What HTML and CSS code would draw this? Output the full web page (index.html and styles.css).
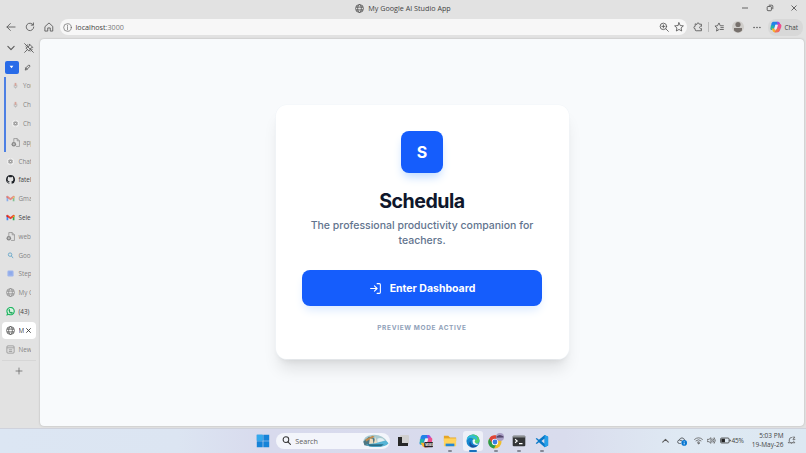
FILE: index.html
```html
<!DOCTYPE html>
<html lang="en">
<head>
    <meta charset="UTF-8">
    <meta name="viewport" content="width=device-width, initial-scale=1.0">
    <title>My Google AI Studio App</title>
    <link rel="stylesheet" href="styles.css">
</head>
<body>
    <svg class="defs" width="0" height="0">
        <symbol id="globe" viewBox="0 0 16 16"><g fill="none" stroke="currentColor" stroke-width="1.3"><circle cx="8" cy="8" r="7"/><ellipse cx="8" cy="8" rx="3.3" ry="7"/><path d="M1.6 5.5h12.8M1.6 10.5h12.8"/></g></symbol>
        <symbol id="gmail" viewBox="0 0 16 16"><path fill="#4285f4" d="M1 4v9h3V6z"/><path fill="#34a853" d="M12 6v7h3V4z"/><path fill="#ea4335" d="M1 3.5L3 3l5 4 5-4 2 .5V6l-7 5-7-5z"/><path fill="#c5221f" d="M1 4l3 2v2L1 6z"/><path fill="#fbbc04" d="M15 4l-3 2v2l3-2z"/></symbol>
        <symbol id="page" viewBox="0 0 16 16"><path fill="none" stroke="currentColor" stroke-width="1.2" d="M5 7V1h6l4 4v10H9M11 1v4h4"/><circle cx="5" cy="11" r="4" fill="currentColor"/><path stroke="#e3e3e3" d="M3 11h4M5 9v4"/></symbol>
        <symbol id="gpt" viewBox="0 0 16 16"><circle cx="8" cy="8" r="8" fill="#f0f0f0"/><g fill="none" stroke="currentColor" stroke-width="1.1"><ellipse cx="8" cy="8" rx="2.3" ry="5.2"/><ellipse cx="8" cy="8" rx="2.3" ry="5.2" transform="rotate(60 8 8)"/><ellipse cx="8" cy="8" rx="2.3" ry="5.2" transform="rotate(120 8 8)"/></g></symbol>
        <symbol id="mic" viewBox="0 0 16 16"><path fill="#d6a49a" d="M6 2h4v7H6z"/><path fill="none" stroke="#aaa" stroke-width="1.4" d="M5 6v6h6V6M8 12v3"/></symbol>
        <symbol id="copilot" viewBox="0 0 16 16"><path fill="#2183e8" d="M4 1h6l2 4H7L5 12H2Q0 12 1 9L2 3Q3 1 4 1z"/><path fill="#20b8a4" d="M1 6h5l-2 6H2Q0 11 1 8z"/><path fill="#f6b32c" d="M2 10h4l2 5H6Q4 15 3 12z"/><path fill="#9a4be0" d="M9 1h2q2 0 3 4h-4z"/><path fill="#ef4f8c" d="M11 4h3q2 1 1 4l-2 5q-1 2-3 2H6l3-4z"/><path fill="#f2744c" d="M6 15l3-5h4l-1 3q-1 2-3 2z"/><path fill="#eef0fa" d="M7.5 5h2.7L8.6 11H5.8z"/></symbol>
    </svg>

    <div class="browser">
        <header class="titlebar">
            <div class="window-title"><svg><use href="#globe"/></svg><span>My Google AI Studio App</span></div>
            <div class="window-buttons">
                <svg viewBox="0 0 8 8"><path d="M1 4h6"/></svg>
                <svg viewBox="0 0 8 8"><rect x="1.2" y="2.5" width="4.2" height="4.2" rx=".8"/><path d="M2.8 1.2h3q1 0 1 1v3"/></svg>
                <svg viewBox="0 0 8 8"><path d="M1.5 1.5l5 5M6.5 1.5l-5 5"/></svg>
            </div>
        </header>

        <nav class="toolbar">
            <svg class="icon" viewBox="0 0 16 16"><path d="M14.500 8h-13M7 2.500L1.500 8 7 13.500"/></svg>
            <svg class="icon" viewBox="0 0 16 16"><path d="M13 4.500a6 6 0 1 0 1 3.500M13.500 1.500v3.500H10"/></svg>
            <svg class="icon" viewBox="0 0 16 16"><path d="M2 7l6-5.500L14 7v7.500h-4V9.500H6v5H2z"/></svg>
            <div class="address">
                <svg class="icon info" viewBox="0 0 16 16"><circle cx="8" cy="8" r="6.800"/><path d="M8 7v5M8 4v1.400"/></svg>
                <span class="url">localhost<i>:3000</i></span>
                <svg class="icon" viewBox="0 0 16 16"><circle cx="7" cy="7" r="5.200"/><path d="M11 11l4 4M4.500 7h5M7 4.500v5"/></svg>
                <svg class="icon star" viewBox="0 0 16 16"><path d="M8 1.200l2 4.500 5 .5-3.700 3.300 1 4.900L8 11.900l-4.300 2.500 1-4.900L1 6.200l5-.5z"/></svg>
            </div>
            <div class="tools">
                <svg class="icon" viewBox="0 0 16 16"><path d="M6 3.500a2 2 0 0 1 4 0h3.500V7a2 2 0 1 0 0 3.500V14H5q-1.500 0-1.500-1.500v-1.700a2 2 0 0 1 0-4V3.500z"/></svg>
                <span class="divider"></span>
                <svg class="icon" viewBox="0 0 16 16"><path d="M8 12l-4 2.500 1-4.900L1.500 6.500l4-.5L8 1.500l2 4.500h5M11 9h4M10 12h5"/></svg>
                <svg class="avatar" viewBox="0 0 12 12"><circle cx="6" cy="6" r="6" fill="#cfcdca"/><circle cx="6" cy="3.500" r="2.600" fill="#77716d"/><path fill="#77716d" d="M2 7h8v2.500Q6 13.500 2 9.500z"/></svg>
                <svg class="dots" viewBox="0 0 9 3"><circle cx="1.200" cy="1.500" r=".9"/><circle cx="4.500" cy="1.500" r=".9"/><circle cx="7.800" cy="1.500" r=".9"/></svg>
                <div class="chat"><svg><use href="#copilot"/></svg><span>Chat</span></div>
            </div>
        </nav>

        <div class="workspace">
            <aside class="tabs">
                <div class="tab-actions">
                    <svg class="icon chevron" viewBox="0 0 16 16"><path d="M3 5.500l5 5 5-5"/></svg>
                    <svg class="icon" viewBox="0 0 16 16"><path d="M1 1l14 14M9 2l5 5-3 1-3 5-5-5 5-3zM5.500 10.500L1 15M3 5l3-2M11 13l2-3"/></svg>
                </div>
                <div class="tab-actions">
                    <span class="group-chip"><svg viewBox="0 0 8 6"><path d="M1 1h6L4 5z"/></svg></span>
                    <svg class="icon pencil" viewBox="0 0 16 16"><path d="M3 13l1-4 7-7 3 3-7 7zM4 9l3 3"/></svg>
                </div>
                <div class="group">
                    <div class="tab"><svg class="small"><use href="#mic"/></svg><span>You</span></div>
                    <div class="tab"><svg class="small"><use href="#mic"/></svg><span>Ch</span></div>
                    <div class="tab"><svg class="small"><use href="#gpt"/></svg><span>Ch</span></div>
                    <div class="tab"><svg><use href="#page"/></svg><span>app</span></div>
                </div>
                <div class="tab"><svg class="small"><use href="#gpt"/></svg><span>Chat</span></div>
                <div class="tab loaded"><svg viewBox="0 0 16 16"><path fill="#1f2328" d="M8 0C3.600 0 0 3.600 0 8c0 3.500 2.300 6.500 5.500 7.600.4.100.5-.2.5-.4v-1.500c-2.200.5-2.700-.9-2.700-.9-.4-.9-.9-1.200-.9-1.200-.7-.5.1-.5.1-.5.8.1 1.200.8 1.200.8.7 1.200 1.900.9 2.300.7.100-.5.300-.9.500-1.100-1.800-.2-3.600-.9-3.600-4 0-.9.300-1.600.8-2.100-.1-.2-.4-1 .1-2.100 0 0 .7-.2 2.200.8a7.600 7.600 0 0 1 4 0c1.500-1 2.200-.8 2.200-.8.4 1.100.2 1.900.1 2.100.5.600.8 1.300.8 2.100 0 3.100-1.900 3.700-3.700 3.900.3.300.6.800.6 1.500v2.300c0 .2.100.5.500.4A8 8 0 0 0 8 0z"/></svg><span>fatel</span></div>
                <div class="tab faded"><svg><use href="#gmail"/></svg><span>Gmai</span></div>
                <div class="tab loaded"><svg><use href="#gmail"/></svg><span>Sele</span></div>
                <div class="tab"><svg><use href="#page"/></svg><span>web</span></div>
                <div class="tab"><svg class="small" viewBox="0 0 16 16"><g fill="none" stroke="#65a5c8" stroke-width="2"><circle cx="7" cy="6" r="4"/><path d="M10 9l4 5"/></g></svg><span>Goo</span></div>
                <div class="tab"><svg class="small" viewBox="0 0 16 16"><rect x="1" y="1" width="14" height="14" rx="3" fill="#9db5ed"/><path stroke="#86a2e8" stroke-width="2" d="M4 5h8M4 9h8"/></svg><span>Step</span></div>
                <div class="tab"><svg><use href="#globe"/></svg><span>My G</span></div>
                <div class="tab loaded"><svg viewBox="0 0 16 16"><path fill="#d9f3e2" stroke="#20b562" stroke-width="2" d="M2 14l.8-3A6.500 6.500 0 1 1 5 13z"/><path fill="#20a65b" d="M5 4l1.500-.3L7.500 6l-.8 1.200Q7.500 8.800 9 9.500l1.200-1 2 1.200Q12 12 10 12 5 11 4.500 6z"/></svg><span>(43)</span></div>
                <div class="tab active"><svg><use href="#globe"/></svg><span>M</span><svg class="close" viewBox="0 0 8 8"><path d="M1.500 1.500l5 5M6.500 1.500l-5 5"/></svg></div>
                <div class="tab"><svg viewBox="0 0 16 16"><g fill="none" stroke="currentColor" stroke-width="1.200"><rect x="1.500" y="1.500" width="13" height="13" rx="2"/><path d="M2 5h12M5 8.500h6M5 11.500h6"/></g></svg><span>New</span></div>
                <div class="new-tab"><svg class="icon" viewBox="0 0 16 16"><path d="M8 2v12M2 8h12"/></svg></div>
            </aside>

            <main class="page">
                <section class="card">
                    <div class="logo">S</div>
                    <h1>Schedula</h1>
                    <p class="tagline">The professional productivity companion for teachers.</p>
                    <button class="enter">
                        <svg viewBox="0 0 24 24"><path d="M15 3h4a2 2 0 0 1 2 2v14a2 2 0 0 1-2 2h-4M10 17l5-5-5-5M15 12H3"/></svg>
                        <span>Enter Dashboard</span>
                    </button>
                    <p class="mode">PREVIEW MODE ACTIVE</p>
                </section>
            </main>
        </div>
    </div>

    <footer class="taskbar">
        <div class="apps">
            <div class="app"><svg viewBox="0 0 14 14"><path fill="#1683d8" d="M.8.8h5.900v5.900H.8zM7.300.8h5.900v5.900H7.300zM.8 7.300h5.900v5.900H.8zM7.300 7.300h5.900v5.900H7.300z"/><path fill="#35a9ed" d="M.8.8h5.900v5.900H.8z"/></svg></div>
            <div class="search">
                <svg class="icon" viewBox="0 0 16 16"><circle cx="7" cy="6.500" r="5"/><path d="M10.500 10.500l4.500 4.500"/></svg>
                <span>Search</span>
                <svg class="scene" viewBox="0 0 28 15"><path fill="#a8c9cf" d="M1 9Q1 2 10 1q12-1 17 8-3 5-13 5T1 9z"/><path fill="#4e7884" d="M1 8l6-5 5 1 3 5-7 4-6-1z"/><path fill="#c08b4d" d="M3 6l8-4 2 1-9 5z"/><path fill="#ecdcc0" d="M8 5h3l1 6H7zM14 3l2 8h-4z"/><path fill="#55b4d6" d="M14 10l11-3 3 3q-3 4-13 4-9 0-11-3z"/><path fill="#e2eff2" d="M16 5q5-2 8 2l-8 2z"/><path fill="#2b6d86" d="M5 11l18 0-3 2H8z"/></svg>
            </div>
            <div class="app"><svg viewBox="0 0 14 14"><rect x="4" y="1" width="9" height="9" rx="1" fill="#d0cfcf"/><path fill="#272727" d="M2 3h4v6h6v3H2z"/></svg></div>
            <div class="app"><svg viewBox="0 0 16 16"><use href="#copilot"/><rect x="6" y="9" width="10" height="6" rx="1" fill="#292426"/><text x="7" y="13.200" class="badge">M365</text></svg></div>
            <div class="app running"><svg viewBox="0 0 16 16"><path fill="#e5a526" d="M1 2h5l2 2h7v4H1z"/><path fill="#ffd35c" d="M1 5h14v9H1z"/><path fill="#2286d5" d="M3 11h10v3H3z"/></svg></div>
            <div class="app running current"><svg viewBox="0 0 16 16"><circle cx="8" cy="8" r="7.500" fill="#1687cf"/><path fill="#4cd06f" d="M2 3.500Q5 0 9 .6q6 1 6.500 7Q15 11 11 11q-3-1-1.500-3Q9 4 2 3.500z"/><path fill="#30b8df" d="M1 5q3-5 9-3 4 2 2 5-2-3-6-3-3 0-5 3z"/><path fill="#164f9d" d="M5 8q0 6 8 5.500-3 3-7 1.500-4-3-1-7z"/><path fill="#eef7fc" d="M7.500 7Q10 5 10.500 7.500 9 9 11 10.500q2 1.500 4 0-1 2-3 2Q7 12 7.500 7z"/></svg></div>
            <div class="app running"><svg class="chrome" viewBox="0 0 16 16"><circle cx="7" cy="9" r="6.500" fill="#efbe2c"/><path fill="#df4438" d="M1.300 5.500A6.500 6.500 0 0 1 13 6.500H7L4.500 11z"/><path fill="#2b9b4b" d="M1.300 5.500L5 11.500l3 .5-2 3.500A6.500 6.500 0 0 1 1.300 5.500z"/><circle cx="7" cy="9" r="3.200" fill="#fff"/><circle cx="7" cy="9" r="2.400" fill="#397de6"/><circle cx="12" cy="4" r="4" fill="#aaa0c6"/><path fill="#55486d" d="M8.500 3.500q3-3 7 0v1l-7 .3z"/></svg></div>
            <div class="app running"><svg viewBox="0 0 16 16"><rect x=".8" y="2" width="14.400" height="12" rx="1.200" fill="#343638"/><path fill="#8d9092" d="M1 2h14v2H1z"/><path fill="none" stroke="#fff" stroke-width="1.200" d="M3.500 6l2.500 2-2.500 2M8 11h4"/></svg></div>
            <div class="app running"><svg viewBox="0 0 16 16"><path fill="#0878c8" fill-rule="evenodd" d="M11 1l4 2v10l-4 2-6.500-5.500L2 11.500l-1.200-1L3.500 8 .8 5.500 2 4.500l2.500 2zM11 5L7.300 8l3.700 3z"/><path fill="#269fe8" d="M11 1l4 2v10l-4 2z"/></svg></div>
        </div>
        <div class="tray">
            <svg class="icon caret" viewBox="0 0 16 16"><path d="M3 11l5-5 5 5"/></svg>
            <svg class="onedrive" viewBox="0 0 16 16"><path fill="none" stroke="#555b60" stroke-width="1.500" d="M6 12H4Q1 12 1 9q0-2 2.500-2.500Q5 3 8 3t4.500 4M4 7q3-1 5 2"/><circle cx="11.500" cy="11" r="4.500" fill="#0877d1"/><path stroke="#fff" stroke-width="1.300" d="M11.500 8.500v1M11.500 10.500v3"/></svg>
            <svg class="icon wifi" viewBox="0 0 16 16"><path d="M1 6q7-6 14 0M3.500 8.500q4.500-4 9 0M6 11q2-2 4 0"/><circle cx="8" cy="13" r="1"/></svg>
            <svg class="icon volume" viewBox="0 0 16 16"><path d="M1 6h2.500L7 3v10L3.500 10H1zM9 6q1.500 2 0 4M11 4.500q3 3.500 0 7M13 3q4 5 0 10"/></svg>
            <svg class="battery" viewBox="0 0 20 12"><rect x="1" y="1.500" width="15.500" height="9" rx="2" fill="none" stroke="#333" stroke-width="1.400"/><path fill="#222" d="M2.500 3H9v6H2.500zM17.500 4q2 0 2 2t-2 2z"/></svg>
            <span class="percent">45%</span>
            <div class="clock"><span>5:03 PM</span><span>19-May-26</span></div>
            <svg class="icon bell" viewBox="0 0 16 16"><path d="M8 2.500Q4 2.500 4 7v3l-2 2h12l-2-2V9M6.500 12q1.500 3 3 0M10.500 2H14l-3.500 4H14"/></svg>
        </div>
    </footer>
</body>
</html>
```
FILE: styles.css
```css
* {
    box-sizing: border-box;
}
body {
    margin: 0;
    width: 806px;
    height: 453px;
    overflow: hidden;
    display: flex;
    flex-direction: column;
    background: #e2e2e2;
    color: #444;
    font-family: "Open Sans", "Noto Sans", sans-serif;
    font-size: 7px;
}
svg {
    display: block;
    flex: none;
}
.defs {
    position: absolute;
}
.icon {
    width: 10px;
    height: 10px;
    fill: none;
    stroke: #5a5a5a;
    stroke-width: 1.4;
    stroke-linecap: round;
    stroke-linejoin: round;
}

/* browser frame */
.browser {
    height: 428px;
    display: flex;
    flex-direction: column;
}
.titlebar {
    height: 17px;
    display: grid;
    grid-template-columns: 1fr auto 1fr;
    align-items: center;
}
.window-title {
    grid-column: 2;
    display: flex;
    align-items: center;
    gap: 4px;
    font-size: 7.2px;
    line-height: 8px;
    padding-bottom: 1px;
}
.window-title svg {
    width: 9px;
    height: 9px;
}
.window-buttons {
    display: flex;
    justify-content: flex-end;
    gap: 16.5px;
    padding: 0 8px 1px 0;
}
.window-buttons svg {
    width: 8px;
    height: 8px;
    fill: none;
    stroke: #444;
    stroke-width: 0.8;
}
.toolbar {
    height: 20px;
    display: flex;
    align-items: center;
    gap: 9px;
    padding-left: 5.5px;
}
.address {
    width: 627px;
    height: 16px;
    margin-left: -3px;
    display: flex;
    align-items: center;
    background: #f7f7f7;
    border-radius: 8px;
    padding: 0 3px;
}
.address .info {
    width: 9px;
    height: 9px;
    margin-right: 4px;
    stroke-width: 1.1;
}
.address .star {
    margin-left: 5px;
}
.url {
    flex: 1;
    font-size: 7.2px;
    line-height: 8px;
}
.url i {
    font-style: normal;
    color: #777;
}
.tools {
    display: flex;
    align-items: center;
    margin-left: -3px;
}
.divider {
    width: 1px;
    height: 10px;
    margin: 0 5px;
    background: #bbb;
}
.avatar {
    width: 12px;
    height: 12px;
    margin: 0 9px 0 8px;
}
.dots {
    width: 8px;
    height: 3px;
    fill: #555;
}
.chat {
    display: flex;
    align-items: center;
    gap: 3px;
    width: 35px;
    height: 17px;
    margin-left: 7px;
    padding-left: 2px;
    border-radius: 8px;
    background: #d8d8d8;
    font-size: 6.3px;
}
.chat svg {
    width: 12px;
    height: 12px;
}

/* vertical tabs */
.workspace {
    flex: 1;
    display: flex;
    padding-top: 2px;
}
.tabs {
    width: 40px;
}
.tab-actions {
    height: 18.8px;
    display: flex;
    align-items: center;
    justify-content: space-between;
    padding: 0 6.5px 0 6px;
}
.tab-actions:nth-child(2) {
    padding: 0 9px 0 4.5px;
}
.tab-actions .chevron {
    stroke-width: 1.8;
}
.tab-actions .pencil {
    width: 7px;
    height: 7px;
    stroke-width: 2;
}
.group-chip {
    width: 14px;
    height: 13px;
    display: flex;
    align-items: center;
    justify-content: center;
    border-radius: 2px;
    background: #286be8;
}
.group-chip svg {
    width: 5px;
    height: 4px;
    fill: #fff;
}
.group {
    border-left: 2px solid #4d80e4;
    margin-left: 4px;
}
.tab {
    height: 18.8px;
    display: flex;
    align-items: center;
    gap: 3.5px;
    padding-left: 6px;
    width: 31px;
    overflow: hidden;
    white-space: nowrap;
    color: #858585;
    font-size: 6.3px;
}
.group .tab {
    width: 25px;
    padding-left: 4.5px;
}
.tab svg {
    width: 9px;
    height: 9px;
}
.tab svg.small {
    width: 7px;
    height: 7px;
    margin: 1px;
}
.tab.loaded {
    color: #444;
}
.tab.faded svg {
    opacity: 0.55;
}
.tab.active {
    width: 34px;
    height: 16.8px;
    margin: 1px 0 1px 2px;
    padding-left: 4px;
    border-radius: 4px;
    background: #fff;
    color: #444;
}
.tab.active span {
    width: 5px;
    overflow: hidden;
}
.tab .close {
    width: 7px;
    height: 7px;
    margin-left: -2.5px;
    stroke: #333;
}
.new-tab {
    width: 34px;
    height: 21px;
    margin: 1px 0 0 2px;
    display: flex;
    align-items: center;
    justify-content: center;
    border-top: 1px solid #d6d6d6;
}
.new-tab .icon {
    width: 8px;
    height: 8px;
}

/* login page */
.page {
    width: 764px;
    height: 387px;
    display: flex;
    align-items: center;
    justify-content: center;
    background: #f8fafc;
    border-radius: 4px;
    box-shadow: 0 0 2px #aaa;
    font-family: Inter, sans-serif;
}
.card {
    width: 293px;
    height: 254px;
    margin-top: -1px;
    padding: 26px;
    display: flex;
    flex-direction: column;
    align-items: center;
    background: #fff;
    border-radius: 11px;
    box-shadow: 0 0 0 0.5px #f1f5f9, 0 13px 16px -3px rgba(0, 0, 0, 0.1), 0 5px 7px -4px rgba(0, 0, 0, 0.1);
    text-align: center;
}
.logo {
    width: 42px;
    height: 42px;
    flex: none;
    display: flex;
    align-items: center;
    justify-content: center;
    border-radius: 8px;
    background: #155dfc;
    color: #fff;
    font-size: 16px;
    font-weight: 700;
    box-shadow: 0 6px 10px -2px #bedbff;
}
.card h1 {
    margin: 17px 0 4px;
    color: #0f172b;
    font-size: 19.6px;
    line-height: 23.5px;
    font-weight: 700;
    letter-spacing: -0.5px;
}
.tagline {
    margin: 0;
    color: #62748e;
    font-size: 10.5px;
    line-height: 15.7px;
    font-weight: 500;
}
.enter {
    width: 240.5px;
    height: 36.5px;
    flex: none;
    margin: 21px 0 0;
    padding: 0;
    display: flex;
    align-items: center;
    justify-content: center;
    gap: 8px;
    border: none;
    border-radius: 8px;
    background: #155dfc;
    color: #fff;
    font-family: inherit;
    font-size: 10.5px;
    font-weight: 700;
    box-shadow: 0 6px 10px -2px #dbeafe;
}
.enter svg {
    width: 13px;
    height: 13px;
    fill: none;
    stroke: #fff;
    stroke-width: 2;
    stroke-linecap: round;
    stroke-linejoin: round;
}
.mode {
    margin: 16.5px 0 0;
    color: #90a1b9;
    font-size: 6.5px;
    line-height: 10px;
    font-weight: 700;
    letter-spacing: 0.66px;
}

/* windows taskbar */
.taskbar {
    height: 25px;
    display: flex;
    justify-content: space-between;
    border-top: 1px solid #cfd2dc;
    background: linear-gradient(90deg, #dce6f3 0%, #dce5f2 22%, #d8daed 33%, #d9dced 70%, #dfe9f3 84%, #dce8f2 100%);
}
.apps {
    height: 23px;
    display: flex;
    align-items: center;
    padding-left: 251.5px;
}
.app {
    width: 23.2px;
    height: 23px;
    display: flex;
    align-items: center;
    justify-content: center;
    position: relative;
}
.app svg {
    width: 14px;
    height: 14px;
}
.app .chrome {
    width: 16px;
    height: 16px;
}
.app .badge {
    fill: #fff;
    font-size: 3.5px;
    font-weight: 700;
}
.running::after {
    content: "";
    position: absolute;
    bottom: 0;
    width: 4px;
    height: 2px;
    border-radius: 1px;
    background: #858996;
}
.current {
    width: 20px;
    height: 20px;
    margin: 0 1.6px;
    border-radius: 3px;
    background: #eef0f8;
}
.current::after {
    bottom: -1px;
    width: 8px;
    background: #1671bd;
}
.search {
    width: 114px;
    height: 16px;
    margin: 0 1.5px;
    display: flex;
    align-items: center;
    gap: 4px;
    padding-left: 6px;
    border-radius: 8px;
    background: #f3f5fb;
    color: #606060;
    font-size: 7.2px;
    line-height: 8px;
}
.search .icon {
    width: 9px;
    height: 9px;
    stroke: #333;
    stroke-width: 1.8;
}
.search .scene {
    width: 27px;
    height: 14px;
    margin: 0 1px 0 auto;
}
.tray {
    height: 23px;
    display: flex;
    align-items: center;
    padding-right: 10.5px;
    font-size: 6.5px;
}
.tray .caret {
    width: 9px;
    height: 9px;
    margin-right: 7px;
    stroke-width: 1.8;
}
.onedrive {
    width: 10px;
    height: 10px;
}
.tray .wifi {
    width: 9px;
    height: 9px;
    margin-left: 7px;
}
.tray .volume {
    width: 9px;
    height: 9px;
    margin: 0 4px;
}
.battery {
    width: 11px;
    height: 7px;
}
.percent {
    width: 13px;
    margin-left: 1px;
    letter-spacing: -0.2px;
}
.clock {
    width: 39px;
    display: flex;
    flex-direction: column;
    align-items: flex-end;
    line-height: 8.2px;
}
.tray .bell {
    margin-left: 3px;
    width: 9px;
    height: 9px;
}
```
